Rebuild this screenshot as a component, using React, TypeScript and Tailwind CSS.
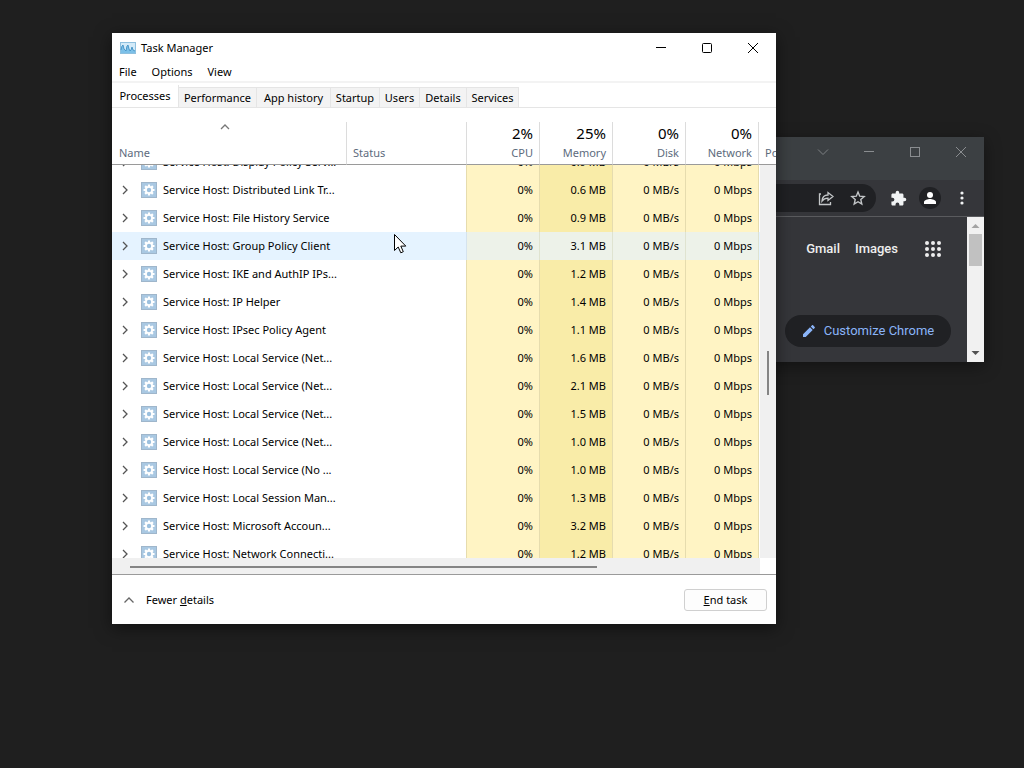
import { useLayoutEffect, useRef } from "react"

const processes = [
  { name: "Service Host: Display Policy Serv...", memory: "0.9 MB" },
  { name: "Service Host: Distributed Link Tr...", memory: "0.6 MB" },
  { name: "Service Host: File History Service", memory: "0.9 MB" },
  { name: "Service Host: Group Policy Client", memory: "3.1 MB", hovered: true },
  { name: "Service Host: IKE and AuthIP IPs...", memory: "1.2 MB" },
  { name: "Service Host: IP Helper", memory: "1.4 MB" },
  { name: "Service Host: IPsec Policy Agent", memory: "1.1 MB" },
  { name: "Service Host: Local Service (Net...", memory: "1.6 MB" },
  { name: "Service Host: Local Service (Net...", memory: "2.1 MB" },
  { name: "Service Host: Local Service (Net...", memory: "1.5 MB" },
  { name: "Service Host: Local Service (Net...", memory: "1.0 MB" },
  { name: "Service Host: Local Service (No ...", memory: "1.0 MB" },
  { name: "Service Host: Local Session Man...", memory: "1.3 MB" },
  { name: "Service Host: Microsoft Accoun...", memory: "3.2 MB" },
  { name: "Service Host: Network Connecti...", memory: "1.2 MB" },
]

const usage = [
  { total: "2%", label: "CPU" },
  { total: "25%", label: "Memory" },
  { total: "0%", label: "Disk" },
  { total: "0%", label: "Network" },
]

const tabs = [
  { label: "Performance", width: "w-[78px]" },
  { label: "App history", width: "w-[74px]" },
  { label: "Startup", width: "w-[49px]" },
  { label: "Users", width: "w-10" },
  { label: "Details", width: "w-[47px]" },
  { label: "Services", width: "w-[52px]" },
]

const AppIcon = () => (
  <svg width="16" height="12" viewBox="0 0 16 12" aria-hidden="true">
    <rect x="0.5" y="0.5" width="15" height="11" fill="#d3eaf8" stroke="#8fc0de" />
    <path d="M1 11V7l1-3 1-1 1 4 2 2 1-5 1-1 1 4 1 2 1-1 1-3 1 3 2 1v2z" fill="#7cc0e8" />
    <path d="M1 8l1-4 1-1 1 4 2 2 1-5 1-1 1 4 1 2 1-1 1-3 1 3 2 1" fill="none" stroke="#4a97c8" />
  </svg>
)

const GearIcon = () => (
  <svg width="16" height="16" viewBox="0 0 16 16" className="shrink-0" aria-hidden="true">
    <rect width="16" height="16" fill="#9fb6cb" />
    <rect x="1" y="1" width="14" height="14" fill="#a9c8e2" />
    <g stroke="#fff" strokeWidth="2.200">
      <path d="M8 2.500v11M2.500 8h11M4.100 4.100l7.800 7.800M11.900 4.100l-7.800 7.800" />
    </g>
    <circle cx="8" cy="8" r="4" fill="#fff" />
    <circle cx="8" cy="8" r="2.200" fill="#9cc0de" />
  </svg>
)

const Chevron = ({ d, className }: { d: string; className?: string }) => (
  <svg width="10" height="10" viewBox="0 0 10 10" className={className} fill="none" stroke="currentColor" strokeWidth="1.300" aria-hidden="true">
    <path d={d} />
  </svg>
)

const WindowButtons = ({ light }: { light?: boolean }) => (
  <div className={light ? "flex text-[#8a8d90]" : "flex text-black"}>
    <button aria-label="Minimize" className="flex h-[30px] w-[46px] items-center justify-center">
      <svg width="10" height="10" viewBox="0 0 10 10" stroke="currentColor"><path d="M0 4.500h10" /></svg>
    </button>
    <button aria-label="Maximize" className="flex h-[30px] w-[46px] items-center justify-center">
      <svg width="10" height="10" viewBox="0 0 10 10" fill="none" stroke="currentColor"><rect x="0.500" y="0.500" width="9" height="9" rx={light ? 0 : 1} /></svg>
    </button>
    <button aria-label="Close" className="flex h-[30px] w-[46px] items-center justify-center">
      <svg width="10" height="10" viewBox="0 0 10 10" stroke="currentColor"><path d="M0 0l10 10M10 0L0 10" /></svg>
    </button>
  </div>
)

const ProcessTable = () => {
  const list = useRef<HTMLDivElement>(null)

  useLayoutEffect(() => {
    if (list.current) list.current.scrollTop = 17
  }, [])

  return (
    <div className="relative">
      <div ref={list} className="h-[436px] overflow-hidden">
        <table className="w-[740px] table-fixed border-separate border-spacing-0">
          <thead className="sticky top-0 bg-white text-[#5d6b7d]">
            <tr className="h-[43px]">
              <th className="relative w-[235px] border-r border-b border-r-[#dcdcdc] border-b-[#9a9a9a] pb-[2px] pl-[7px] text-left align-bottom leading-[18px] font-normal">
                Name
                <Chevron d="M1 7l4-4 4 4" className="absolute top-0 left-[108px] text-[#777]" />
              </th>
              <th className="w-[120px] border-r border-b border-r-[#dcdcdc] border-b-[#9a9a9a] pb-[2px] pl-[6px] text-left align-bottom leading-[18px] font-normal">Status</th>
              {usage.map((u) => (
                <th key={u.label} className="w-[73px] border-r border-b border-r-[#dcdcdc] border-b-[#9a9a9a] pr-[6px] pb-[2px] text-right align-bottom font-normal">
                  <span className="block text-[15px] leading-[22px] text-black">{u.total}</span>
                  <span className="block leading-[18px]">{u.label}</span>
                </th>
              ))}
              <th className="border-b border-b-[#9a9a9a] pb-[2px] pl-[6px] text-left align-bottom leading-[18px] font-normal whitespace-nowrap">Power usage</th>
            </tr>
          </thead>
          <tbody>
            {processes.map((p, i) => {
              const cell = p.hovered ? "border-r border-[#dfe3d0] bg-[#edf2e9] pr-[6px] text-right" : "border-r border-[#e6dcae] bg-[#fff4c4] pr-[6px] text-right"
              return (
                <tr key={i} className={p.hovered ? "h-7 bg-[#e5f3ff]" : "h-7"}>
                  <td className="pl-2">
                    <div className="flex items-center whitespace-nowrap">
                      <Chevron d="M3 1l4 4-4 4" className="mr-[11px] shrink-0 text-[#555]" />
                      <GearIcon />
                      <span className="ml-[6px]">{p.name}</span>
                    </div>
                  </td>
                  <td className={p.hovered ? "border-r border-[#d5e3ee]" : "border-r border-[#e6dcae]"}></td>
                  <td className={cell}>0%</td>
                  <td className={p.hovered ? cell : "border-r border-[#e6dcae] bg-[#f9eca8] pr-[6px] text-right"}>{p.memory}</td>
                  <td className={cell}>0 MB/s</td>
                  <td className={cell}>0 Mbps</td>
                  <td></td>
                </tr>
              )
            })}
          </tbody>
        </table>
      </div>
      {/* vertical scroll bar */}
      <div className="absolute top-[43px] right-0 bottom-0 w-4 bg-[#f0f0f0]">
        <div className="mt-[186px] ml-[7px] h-11 w-[2px] bg-[#858585]"></div>
      </div>
    </div>
  )
}

const TaskManager = () => {
  return (
    <section className="absolute top-[33px] left-28 w-[664px] bg-white text-[11px] leading-4 text-black shadow-[0_4px_16px_rgba(0,0,0,0.5)]">
      <header className="flex h-[30px] items-center justify-between pl-2">
        <h1 className="flex items-center gap-[5px]">
          <AppIcon />
          Task Manager
        </h1>
        <WindowButtons />
      </header>
      <nav className="flex h-5 items-center gap-[15px] border-b-2 border-[#f3f3f3] pl-[7px]">
        <button className="leading-5">File</button>
        <button className="leading-5">Options</button>
        <button className="leading-5">View</button>
      </nav>
      <div role="tablist" className="flex h-[25px] items-end border-b border-[#e5e5e5]">
        <button role="tab" aria-selected="true" className="h-[22px] w-[67px] border-r border-[#e5e5e5] text-center leading-[22px]">Processes</button>
        {tabs.map((t) => (
          <button key={t.label} role="tab" aria-selected="false" className={`${t.width} h-5 border-t border-r border-[#e5e5e5] bg-[#f3f3f3] text-center leading-[18px] whitespace-nowrap`}>
            {t.label}
          </button>
        ))}
      </div>
      <div className="pt-[14px]">
        <ProcessTable />
      </div>
      <div className="mr-4 h-4 bg-[#f0f0f0] pt-2 pl-[18px]">
        <div className="h-[2px] w-[467px] bg-[#858585]"></div>
      </div>
      <footer className="flex h-[50px] items-center justify-between border-t border-[#9a9a9a] pr-[9px] pl-3">
        <button className="flex items-center gap-3">
          <Chevron d="M0.500 7.500l4.500-4.500 4.500 4.500" className="text-[#666]" />
          <span>Fewer <u>d</u>etails</span>
        </button>
        <button className="h-[22px] w-[83px] rounded-[3px] border border-[#d0d0d0] bg-[#fdfdfd]"><u>E</u>nd task</button>
      </footer>
    </section>
  )
}

const ChromeWindow = () => {
  return (
    <section className="absolute top-[137px] left-[600px] w-[384px] bg-[#35363a] shadow-[0_4px_16px_rgba(0,0,0,0.4)]">
      <header className="flex h-[43px] justify-end bg-[#3c4043]">
        <button aria-label="Search tabs" className="flex h-[30px] w-[46px] items-center justify-center">
          <svg width="12" height="8" viewBox="0 0 12 8" fill="none" stroke="#7d8083"><path d="M1 1.500l5 5 5-5" /></svg>
        </button>
        <WindowButtons light />
      </header>
      <div className="flex h-[37px] items-center border-b border-[#5a5b5e] pr-[14px]">
        <div className="flex h-7 w-[276px] items-center justify-end gap-4 rounded-full bg-[#202124] pr-[10px] text-[#c4c7c9]">
          <button aria-label="Share">
            <svg width="16" height="16" viewBox="0 0 16 16" fill="none" stroke="currentColor" strokeWidth="1.300">
              <path d="M3 4H1.500v10.500h11V12M4 11c.3-4 2.500-6 6-6V2.500l5 4-5 4V8.200c-2.600 0-4.500.8-6 2.800z" />
            </svg>
          </button>
          <button aria-label="Bookmark">
            <svg width="16" height="16" viewBox="0 0 16 16" fill="none" stroke="currentColor" strokeWidth="1.400">
              <path d="M8 2l1.700 4.200 4.500.4-3.400 3 1 4.400L8 11.700 4.200 14l1-4.400-3.400-3 4.500-.4z" />
            </svg>
          </button>
        </div>
        <div className="ml-auto flex items-center text-[#f1f3f4]">
          <button aria-label="Extensions">
            <svg width="17" height="17" viewBox="0 0 24 24" fill="currentColor">
              <path d="M20.500 11H19V7c0-1.100-.9-2-2-2h-4V3.500a2.500 2.500 0 0 0-5 0V5H4c-1.100 0-2 .9-2 2v3.800h1.500a2.700 2.700 0 0 1 0 5.400H2V20c0 1.100.9 2 2 2h3.800v-1.500a2.700 2.700 0 0 1 5.400 0V22H17c1.100 0 2-.9 2-2v-4h1.500a2.500 2.500 0 0 0 0-5z" />
            </svg>
          </button>
          <button aria-label="Profile" className="ml-3 flex size-[22px] items-center justify-center rounded-full bg-[#202124] text-white">
            <svg width="12" height="12" viewBox="0 0 12 12" fill="currentColor">
              <circle cx="6" cy="3" r="3" />
              <path d="M0 12v-2c0-2 4-3 6-3s6 1 6 3v2z" />
            </svg>
          </button>
          <button aria-label="Menu" className="ml-[13px]">
            <svg width="16" height="16" viewBox="0 0 16 16" fill="currentColor">
              <circle cx="8" cy="3" r="1.600" /><circle cx="8" cy="8" r="1.600" /><circle cx="8" cy="13" r="1.600" />
            </svg>
          </button>
        </div>
      </div>
      <div className="flex h-[145px]">
        <main className="flex grow flex-col items-end justify-between">
          <nav className="mt-[22px] mr-[26px] flex items-center gap-[15px] font-[Roboto] text-[13px] font-medium text-[#eee]">
            <a href="#gmail">Gmail</a>
            <a href="#images">Images</a>
            <button aria-label="Google apps" className="ml-3">
              <svg width="16" height="16" viewBox="0 0 16 16" fill="currentColor" className="block">
                {[2, 8, 14].map((y) => [2, 8, 14].map((x) => <circle key={`${x}-${y}`} cx={x} cy={y} r="2" />))}
              </svg>
            </button>
          </nav>
          <button className="mr-4 mb-[15px] flex h-8 w-[166px] items-center justify-center gap-2 rounded-full bg-[#202124] font-[Roboto] text-[13px] text-[#8ab4f8]">
            <svg width="14" height="14" viewBox="0 0 14 14" fill="currentColor">
              <path d="M1 10.300V13h2.700l7-7L8 3.300zM12.700 3.900c.3-.3.3-.7 0-1L11.100 1.300c-.3-.3-.7-.3-1 0L8.800 2.600l2.600 2.600z" />
            </svg>
            Customize Chrome
          </button>
        </main>
        <div className="flex w-[17px] flex-col items-center bg-[#f1f1f1]">
          <svg width="17" height="17" viewBox="0 0 17 17"><path d="M4.500 11h8l-4-4z" fill="#a3a3a3" /></svg>
          <div className="h-8 w-[13px] bg-[#c1c1c1]"></div>
          <svg width="17" height="17" viewBox="0 0 17 17" className="mt-auto"><path d="M4.500 6h8l-4 4z" fill="#505050" /></svg>
        </div>
      </div>
    </section>
  )
}

const App = () => {
  return (
    <div className="relative min-h-screen w-full overflow-hidden bg-[#1f1f1f] font-['Noto_Sans',sans-serif]">
      <ChromeWindow />
      <TaskManager />
      <svg width="13" height="20" viewBox="0 0 13 20" className="absolute top-[234px] left-[394px]" aria-hidden="true">
        <path d="M0.500 0.500v16l3.700-3.500 2.600 5.800 2.500-1.100-2.500-5.600h5z" fill="#fff" stroke="#000" />
      </svg>
    </div>
  )
}

export default App
